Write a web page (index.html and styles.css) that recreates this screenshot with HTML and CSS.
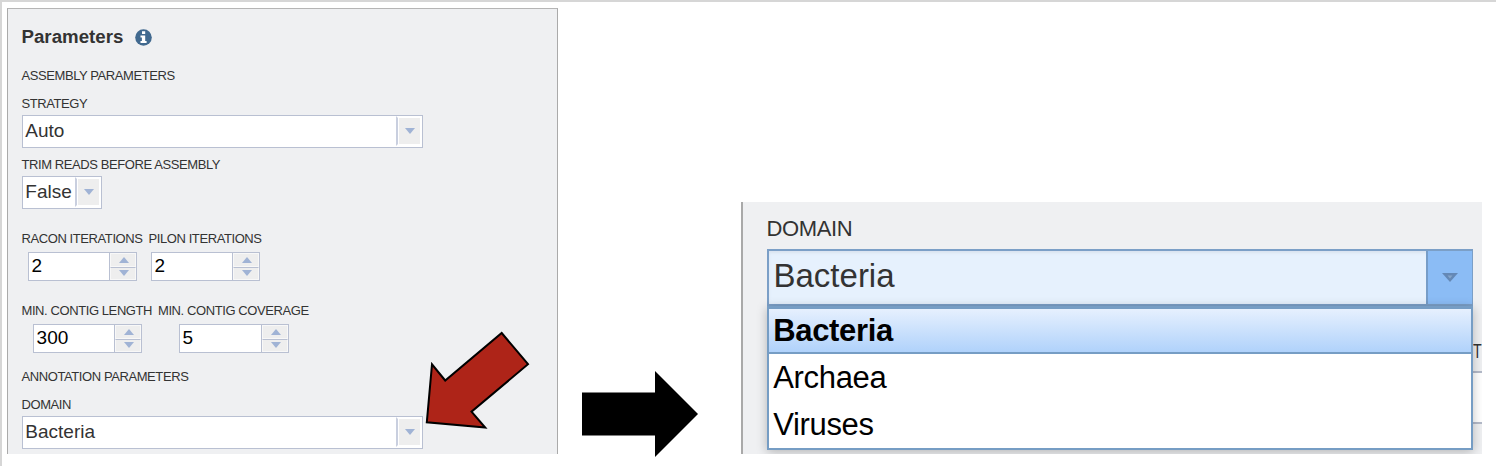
FILE: index.html
```html
<!DOCTYPE html>
<html lang="en">
<head>
<meta charset="utf-8">
<title>Parameters</title>
<link rel="stylesheet" href="styles.css">
</head>
<body>
<main class="page">
  <section class="panel">
    <h2 class="title"><span>Parameters</span>
      <svg class="info" viewBox="0 0 17 17"><circle cx="8.5" cy="8.5" r="8.3" fill="#41698f"/><path d="M7 2.200h3.200v2.900H7zM5.500 6.500h4.700v5.400h1.400v2.200H5.500v-2.200h1.400V8.600H5.500z" fill="#fff"/></svg>
    </h2>
    <div class="label group"><span>ASSEMBLY PARAMETERS</span></div>
    <div class="label field"><span>STRATEGY</span></div>
    <div class="select"><span class="value">Auto</span><span class="drop"><svg viewBox="0 0 10 6"><path d="M0 0h10L5 6z"/></svg></span></div>
    <div class="label trim"><span>TRIM READS BEFORE ASSEMBLY</span></div>
    <div class="select small"><span class="value">False</span><span class="drop"><svg viewBox="0 0 10 6"><path d="M0 0h10L5 6z"/></svg></span></div>
    <div class="pair racon">
      <div class="cell"><div class="label"><span>RACON ITERATIONS</span></div>
        <div class="spinner"><span class="number">2</span><span class="steps"><i><svg viewBox="0 0 10 6"><path d="M0 6h10L5 0z"/></svg></i><i><svg viewBox="0 0 10 6"><path d="M0 0h10L5 6z"/></svg></i></span></div></div>
      <div class="cell"><div class="label"><span>PILON ITERATIONS</span></div>
        <div class="spinner"><span class="number">2</span><span class="steps"><i><svg viewBox="0 0 10 6"><path d="M0 6h10L5 0z"/></svg></i><i><svg viewBox="0 0 10 6"><path d="M0 0h10L5 6z"/></svg></i></span></div></div>
    </div>
    <div class="pair contig">
      <div class="cell"><div class="label"><span>MIN. CONTIG LENGTH</span></div>
        <div class="spinner"><span class="number">300</span><span class="steps"><i><svg viewBox="0 0 10 6"><path d="M0 6h10L5 0z"/></svg></i><i><svg viewBox="0 0 10 6"><path d="M0 0h10L5 6z"/></svg></i></span></div></div>
      <div class="cell"><div class="label"><span>MIN. CONTIG COVERAGE</span></div>
        <div class="spinner wide"><span class="number">5</span><span class="steps"><i><svg viewBox="0 0 10 6"><path d="M0 6h10L5 0z"/></svg></i><i><svg viewBox="0 0 10 6"><path d="M0 0h10L5 6z"/></svg></i></span></div></div>
    </div>
    <div class="label group annotation"><span>ANNOTATION PARAMETERS</span></div>
    <div class="label field"><span>DOMAIN</span></div>
    <div class="select"><span class="value">Bacteria</span><span class="drop"><svg viewBox="0 0 10 6"><path d="M0 0h10L5 6z"/></svg></span></div>
  </section>

  <section class="detail">
    <div class="detail-label"><span>DOMAIN</span></div>
    <div class="open-select"><span class="open-value">Bacteria</span><span class="open-drop"><svg viewBox="0 0 18 11"><path d="M1 1h16L9 10z" fill="#6488b5"/><path d="M6.500 3.500h5L9 6.500z" fill="#86a5c9"/></svg></span></div>
    <div class="behind"><span class="cut">T</span><span class="strip"></span></div>
    <ul class="menu">
      <li class="active">Bacteria</li>
      <li>Archaea</li>
      <li>Viruses</li>
    </ul>
  </section>

  <svg class="arrows" viewBox="0 0 1496 466">
    <path d="M426.800 422.300L432 364.300 445.200 380.500 501.700 333 528 364.200 471.500 411.700 485.200 427.600Z" fill="#ae2418" stroke="#000" stroke-width="2"/>
    <path d="M582 392.500h73V371l43 43-43 43v-21.500h-73z"/>
  </svg>
</main>
</body>
</html>
```
FILE: styles.css
```css
* { box-sizing: border-box; }
body { margin: 0; background: #fff; font-family: "Liberation Sans", Arial, sans-serif; color: #333; }
.page { position: relative; display: flex; width: 1496px; height: 466px; overflow: hidden; border-left: 2px solid #d6d6d6; border-top: 2px solid #d6d6d6; white-space: nowrap; }
.panel { flex: none; width: 551px; height: 446px; margin: 6px 0 0 5px; padding-left: 14px; background: #eff0f2; border: 1px solid #aaa; border-top-color: #b5b5b5; border-bottom: 0; }
.title { display: flex; align-items: center; gap: 11.5px; height: 56px; margin: 0 0 0 -.5px; font-size: 18.7px; line-height: 22px; }
.info { width: 17px; height: 17px; }
.label { display: flex; align-items: center; font-size: 13px; line-height: 15px; letter-spacing: -.41px; text-indent: -.5px; }
.group { height: 21px; }
.field { height: 23px; margin-top: 6px; }
.trim { height: 24px; margin-top: 4px; }
.annotation { margin-top: 13px; }
.select { display: flex; width: 401px; height: 33px; background: #fff; border: 1px solid #b9c0d2; }
.value { flex: 1; padding-left: 2.3px; font-size: 19px; line-height: 30px; }
.drop { display: flex; align-items: center; justify-content: center; width: 26px; margin-bottom: 1px; background: #eee; border: 2px solid #fff; border-left: 2px solid #c9cfdf; box-shadow: inset 1px 0 #fff; }
.drop svg { width: 10px; height: 6px; margin-left: 1px; fill: #a0b3d5; }
.small { width: 80px; }
.pair { display: flex; margin-top: 16px; }
.pair .label { height: 27px; }
.racon .cell:first-child { width: 127px; }
.racon .cell:first-child .spinner { margin-left: 6px; }
.racon .cell:last-child .spinner { margin-left: 2px; }
.contig .cell:first-child { width: 136.5px; }
.contig .cell:first-child .spinner { margin-left: 11px; }
.contig .cell:last-child .spinner { margin-left: 20.5px; }
.spinner { display: flex; width: 109px; height: 29px; background: #fff; border: 1px solid #b9c0d2; }
.spinner.wide { width: 110px; }
.number { flex: 1; padding-left: 2.6px; color: #000; font-size: 19px; line-height: 26px; }
.steps { display: flex; flex-direction: column; width: 27px; border-left: 1px solid #b9c0d2; background: #eee; }
.steps i { flex: 1; display: flex; align-items: center; justify-content: center; border: 1px solid #f8f8f8; }
.steps i + i { border-top: 1px solid #b9c0d2; }
.steps svg { width: 10px; height: 6px; margin-left: 1px; fill: #a0b3d5; }
.detail { position: relative; flex: none; width: 741px; height: 252px; margin: 200px 0 0 183px; padding-left: 24px; background: #eff0f2; border-left: 2px solid #a9a9a9; overflow: hidden; }
.detail-label { display: flex; align-items: center; height: 47px; padding-top: 6px; font-size: 22px; letter-spacing: -.35px; text-indent: -.5px; }
.open-select { display: flex; width: 706px; height: 57px; background: #e6f1fd; border: 2px solid #7b9fc7; box-shadow: inset 0 2px 3px #d9e3ef; }
.open-value { flex: 1; padding-left: 4.500px; font-size: 33px; line-height: 49px; }
.open-drop { display: flex; align-items: center; justify-content: center; width: 46px; margin-right: -1px; background: #8bbcf5; border-left: 2px solid #769dc8; }
.open-drop svg { width: 18px; height: 11px; }
.menu { position: absolute; left: 24px; top: 104px; width: 706px; height: 144px; margin: 0; padding: 0; list-style: none; background: #fff; border: 2px solid #769dc4; border-top-width: 3px; box-shadow: 0 2px 10px rgba(0,0,0,.25); color: #000; font-size: 31px; letter-spacing: -.35px; }
.menu li { height: 47px; padding-left: 4.3px; line-height: 47px; }
.menu .active { height: 45px; background: linear-gradient(#e6f0fe, #b0d2fb); border-bottom: 2px solid #769dc4; font-weight: bold; line-height: 43px; }
.behind { position: absolute; left: 730px; top: 137px; width: 9px; }
.cut { display: block; width: 13px; height: 32px; font-size: 21px; line-height: 24px; transform: scaleX(.68); transform-origin: 0 0; }
.strip { display: block; height: 53px; background: #fff; border: solid #b4bac9; border-width: 2px 0; }
.arrows { position: absolute; left: -2px; top: -2px; width: 1496px; height: 466px; }
```
